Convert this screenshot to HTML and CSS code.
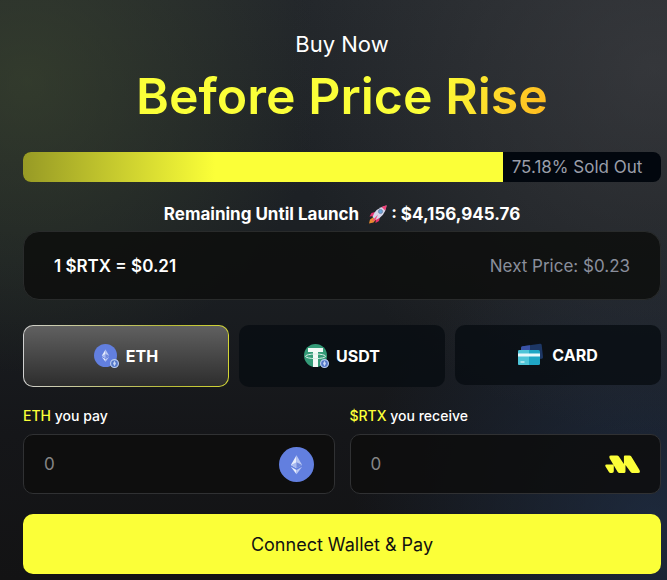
FILE: index.html
```html
<!DOCTYPE html>
<html lang="en">
<head>
    <meta charset="UTF-8">
    <meta name="viewport" content="width=device-width, initial-scale=1.0">
    <title>Buy $RTX</title>
    <link rel="stylesheet" href="styles.css">
</head>
<body>

<!-- Shared icon shapes -->
<svg class="sprite" aria-hidden="true">
    <symbol id="eth" viewBox="0 0 36 36">
        <circle cx="18" cy="18" r="18" fill="#627fdf"/>
        <path d="M18 8.5l-5.8 10 5.8 3.4z" fill="#e9eefc"/>
        <path d="M18 8.5l5.8 10-5.8 3.4z" fill="#b9c7f3"/>
        <path d="M18 15.8l-5.8 2.7 5.8 3.4z" fill="#a9baf0"/>
        <path d="M18 15.8l5.8 2.7-5.8 3.4z" fill="#7088da"/>
        <path d="M12.2 20.3l5.8 3.3v4.3z" fill="#e9eefc"/>
        <path d="M23.8 20.3L18 23.6v4.3z" fill="#b9c7f3"/>
    </symbol>
    <symbol id="badge" viewBox="0 0 8 8">
        <circle cx="4" cy="4" r="3.5" fill="#5578c8" stroke="#b9cbed"/>
        <path d="M4 1.6L2.7 4 4 6.4 5.3 4z" fill="#c9d8f6"/>
    </symbol>
</svg>

<main class="presale">
    <p class="subtitle">Buy Now</p>
    <h1 class="title">Before Price Rise</h1>

    <div class="progress">
        <div class="progress-bar" style="width: 75.18%"></div>
        <div class="progress-label">75.18% Sold Out</div>
    </div>

    <p class="remaining">
        <span>Remaining Until Launch</span>
        <svg class="rocket" viewBox="0 0 20 20" aria-hidden="true">
            <path d="M7 8L3.5 9 1.5 12.5 6 12z" fill="#e5316f"/>
            <path d="M12 13l-1 4-3.5 2 .5-5z" fill="#e5316f"/>
            <path d="M5 13.5l2.5 2.5-2 2.5L1 19.5l1-4z" fill="#e98a2e"/>
            <path d="M4.5 13Q7 4 18.5 1.5 17 12.5 7.5 16z" fill="#d5d6ea"/>
            <path d="M13.5 3Q16 1.9 18.7 1.3 18.4 4 17.2 6.5z" fill="#ef4278"/>
            <path d="M10 10.5L4 17l3.5-1z" fill="#f3467f"/>
            <circle cx="12.5" cy="7.5" r="2.1" fill="#6aa4d8" stroke="#65779a" stroke-width=".7"/>
        </svg>
        <span>: $4,156,945.76</span>
    </p>

    <div class="price-box">
        <span class="price-now">1 $RTX = $0.21</span>
        <span class="price-next">Next Price: $0.23</span>
    </div>

    <div class="methods">
        <button type="button" class="method active">
            <svg class="method-icon" viewBox="0 0 26 24" aria-hidden="true">
                <use href="#eth" width="23" height="23"/>
                <use href="#badge" x="16" y="15" width="9" height="9"/>
            </svg>
            ETH
        </button>
        <button type="button" class="method">
            <svg class="method-icon" viewBox="0 0 26 24" aria-hidden="true">
                <circle cx="11.5" cy="11.5" r="11.5" fill="#349b78"/>
                <path d="M4 4h15v4h-5v15h-5V8H4z" fill="#f3faf7"/>
                <ellipse cx="11.5" cy="12.3" rx="10" ry="2.3" fill="none" stroke="#d8eee6"/>
                <use href="#badge" x="16" y="15" width="9" height="9"/>
            </svg>
            USDT
        </button>
        <button type="button" class="method method-card">
            <svg class="method-icon" viewBox="0 0 26 24" aria-hidden="true">
                <path d="M3 5Q3 3.500 4.500 3.300L22 .7q1.500-.2 1.700 1.300l1.300 12q.2 1.500-1.300 1.700L4 18z" fill="#1d3765"/>
                <path d="M3 5Q3 3.500 4.500 3.300L12 2.200V10H3z" fill="#3952a6"/>
                <rect x="0" y="7" width="22" height="15" rx="1.500" fill="#1fa6c5"/>
                <path d="M1.500 7H11v15H1.500Q0 22 0 20.500v-12Q0 7 1.500 7z" fill="#4fc5d8"/>
                <path d="M0 10.500h22v3H0z" fill="#e6f8fc"/>
                <path d="M2.500 19h4" stroke="#e6f8fc" stroke-width="1.200"/>
            </svg>
            CARD
        </button>
    </div>

    <form class="swap">
        <div class="amounts">
            <div class="field">
                <label for="pay"><span class="token">ETH</span> you pay</label>
                <div class="amount">
                    <input type="text" id="pay" inputmode="decimal" placeholder="0">
                    <svg class="coin" aria-hidden="true"><use href="#eth"/></svg>
                </div>
            </div>
            <div class="field">
                <label for="receive"><span class="token">$RTX</span> you receive</label>
                <div class="amount">
                    <input type="text" id="receive" inputmode="decimal" placeholder="0">
                    <svg class="coin" viewBox="0 0 35 35" fill="#fbff38" aria-hidden="true">
                        <path d="M6 8.500h6q1.200 0 1.900 1.100l5 7.500V9.500q0-1 1-1h4.500q1.200 0 1.900 1.100l8.200 13.500q1.300 3-1.500 3h-5.500q-1.200 0-1.900-1.100L20.500 18v6.500q0 1.600-1.600 1.600h-4.300q-1.200 0-1.900-1.100L4.700 11.500Q3.500 8.500 6 8.500z"/>
                        <path d="M1.500 17.500h7.300v6.800q0 1.800-1.800 1.800H5.500q-1 0-1.600-1L.5 19.500q-.8-2 1-2z"/>
                    </svg>
                </div>
            </div>
        </div>
        <button type="button" class="connect">Connect Wallet &amp; Pay</button>
    </form>
</main>

</body>
</html>
```

FILE: styles.css
```css
* {
    box-sizing: border-box;
}
body {
    margin: 0;
    min-height: 100vh;
    font-family: Inter, "Liberation Sans", sans-serif;
    color: #fff;
    background-color: #15161a;
    background-image:
        radial-gradient(circle at 4% 14%, rgba(62, 73, 47, 0.6), transparent 36%),
        radial-gradient(circle at 98% 12%, rgba(72, 72, 76, 0.5), transparent 44%),
        radial-gradient(circle at 98% 90%, rgba(34, 52, 80, 0.65), transparent 36%),
        linear-gradient(#23272b, #1b1f23 45%, #151619 75%, #131314);
}
p, h1 {
    margin: 0;
}
button, input {
    font-family: inherit;
    color: inherit;
}
.sprite {
    position: absolute;
    width: 0;
    height: 0;
}
.presale {
    padding: 32px 6px 6px 23px;
}
.subtitle {
    font-size: 22px;
    line-height: 24px;
    text-align: center;
}
.title {
    width: fit-content;
    margin: 12px auto 28px;
    font-size: 50px;
    font-weight: 600;
    line-height: 56px;
    text-align: center;
    color: transparent;
    background: linear-gradient(110deg, #fbff38 70%, #ffb71e);
    -webkit-background-clip: text;
    background-clip: text;
}
.progress {
    display: flex;
    align-items: center;
    height: 30px;
    border-radius: 8px;
    overflow: hidden;
    background-color: #02070e;
}
.progress-bar {
    flex-shrink: 0;
    height: 100%;
    background: linear-gradient(90deg, #979a25, #fbff38 40%);
}
.progress-label {
    padding-left: 9px;
    font-size: 17px;
    white-space: nowrap;
    color: #9a9ea9;
}
.remaining {
    display: flex;
    justify-content: center;
    align-items: center;
    gap: 3px;
    margin: 20px 0 5px;
    font-size: 17px;
    font-weight: 700;
    line-height: 24px;
}
.rocket {
    width: 20px;
    height: 20px;
    margin-left: 6px;
}
.price-box {
    display: flex;
    justify-content: space-between;
    align-items: center;
    height: 69px;
    padding: 0 30px;
    border: 1px solid #292b2b;
    border-radius: 16px;
    font-size: 17px;
    background-color: rgba(14, 15, 14, 0.88);
}
.price-now {
    font-weight: 600;
}
.price-next {
    color: #8a8e9b;
}
.methods {
    display: grid;
    grid-template-columns: repeat(3, 1fr);
    align-items: start;
    gap: 10px;
    margin: 25px 0 19px;
}
.method {
    display: flex;
    justify-content: center;
    align-items: center;
    gap: 6px;
    height: 62px;
    padding: 0;
    border: 1px solid transparent;
    border-radius: 10px;
    font-size: 16px;
    font-weight: 700;
    background-color: rgba(8, 13, 18, 0.8);
}
.method.active {
    background:
        linear-gradient(#606060, #2d2d2d) padding-box,
        linear-gradient(90deg, #d0d0d0, #b9bc38 70%, #d3d636) border-box;
}
.method-card {
    gap: 8px;
    height: 60px;
}
.method-icon {
    width: 26px;
    height: 24px;
}
.amounts {
    display: grid;
    grid-template-columns: repeat(2, minmax(0, 1fr));
    gap: 15px;
}
.field label {
    display: block;
    margin-bottom: 8px;
    font-size: 14px;
    font-weight: 500;
    line-height: 20px;
}
.token {
    color: #fbff38;
}
.amount {
    display: flex;
    align-items: center;
    height: 60px;
    padding: 0 20px;
    border: 1px solid #303133;
    border-radius: 10px;
    background-color: rgba(13, 13, 13, 0.85);
}
.amount input {
    flex: 1;
    min-width: 0;
    padding: 0;
    border: 0;
    outline: 0;
    font-size: 17px;
    background: none;
}
.amount input::placeholder {
    color: #858585;
}
.coin {
    flex-shrink: 0;
    width: 35px;
    height: 35px;
}
.connect {
    width: 100%;
    height: 60px;
    margin-top: 20px;
    border: 0;
    border-radius: 10px;
    font-size: 18px;
    color: #111;
    background-color: #fbff38;
}
```
